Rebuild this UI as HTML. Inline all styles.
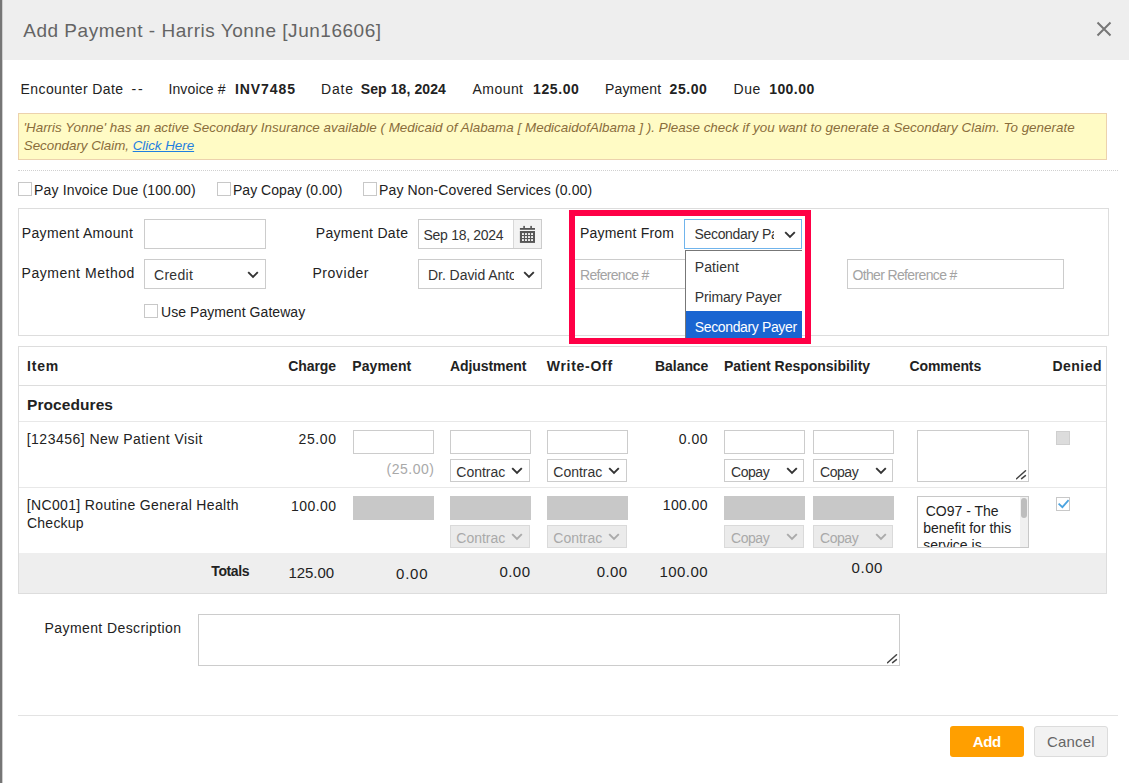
<!DOCTYPE html>
<html><head><meta charset="utf-8"><style>
html,body{margin:0;padding:0;}
body{width:1129px;height:783px;overflow:hidden;position:relative;background:#fff;font-family:"Liberation Sans",sans-serif;}
.t{position:absolute;white-space:nowrap;line-height:1;}
</style></head><body>
<div style="position:absolute;left:0px;top:0px;width:2px;height:783px;background:#767676;"></div>
<div style="position:absolute;left:2px;top:0px;width:1px;height:783px;background:#cfcfcf;"></div>
<div style="position:absolute;left:3px;top:0px;width:1126px;height:60px;background:#eeeeee;"></div>
<div class="t" id="tc54250ba" style="left:23.19px;top:20.72px;font-size:19px;color:#646464;letter-spacing:0.522px;">Add Payment - Harris Yonne [Jun16606]</div>
<svg style="position:absolute;left:1096px;top:21px" width="16" height="16" viewBox="0 0 16 16"><path d="M1.5 1.5L14.5 14.5M14.5 1.5L1.5 14.5" stroke="#777" stroke-width="2"/></svg>
<div class="t" id="t27c33cfd" style="left:20.57px;top:81.95px;font-size:14px;color:#222;letter-spacing:0.4px;">Encounter Date</div>
<div class="t" id="t0044cf76" style="left:131.57px;top:81.95px;font-size:14px;color:#222;letter-spacing:1.8px;">--</div>
<div class="t" id="t6191a0e9" style="left:168.38px;top:81.95px;font-size:14px;color:#222;letter-spacing:0.15px;">Invoice #</div>
<div class="t" id="t9ece07f6" style="left:235.00px;top:81.95px;font-size:14px;color:#222;font-weight:700;letter-spacing:0.917px;">INV7485</div>
<div class="t" id="t7bcd9e4f" style="left:321.00px;top:81.95px;font-size:14px;color:#222;letter-spacing:0.833px;">Date</div>
<div class="t" id="tf08f2a6c" style="left:360.76px;top:81.95px;font-size:14px;color:#222;font-weight:700;letter-spacing:0.091px;">Sep 18, 2024</div>
<div class="t" id="t1211e731" style="left:472.57px;top:81.95px;font-size:14px;color:#222;letter-spacing:0.44px;">Amount</div>
<div class="t" id="ta4474dc1" style="left:533.00px;top:81.95px;font-size:14px;color:#222;font-weight:700;letter-spacing:0.6px;">125.00</div>
<div class="t" id="t69b8a38b" style="left:605.00px;top:81.95px;font-size:14px;color:#222;letter-spacing:0.133px;">Payment</div>
<div class="t" id="tebc281ab" style="left:669.57px;top:81.95px;font-size:14px;color:#222;font-weight:700;letter-spacing:0.575px;">25.00</div>
<div class="t" id="tcc3e4b13" style="left:733.38px;top:81.95px;font-size:14px;color:#222;letter-spacing:0.65px;">Due</div>
<div class="t" id="t79837fd1" style="left:769.17px;top:81.95px;font-size:14px;color:#222;font-weight:700;letter-spacing:0.44px;">100.00</div>
<div style="position:absolute;left:18px;top:113px;width:1089px;height:47px;background:#fffbc5;border:1px solid #ecd2ad;box-sizing:border-box;"></div>
<div class="t" id="teb8300fe" style="left:23.38px;top:121.36px;font-size:13.4px;color:#8a6d3b;font-style:italic;letter-spacing:0.027px;">'Harris Yonne' has an active Secondary Insurance available ( Medicaid of Alabama [ MedicaidofAlbama ] ). Please check if you want to generate a Secondary Claim. To generate</div>
<div class="t" id="t9f3bacfe" style="left:23.79px;top:138.66px;font-size:13.4px;color:#8a6d3b;font-style:italic;letter-spacing:-0.03px;">Secondary Claim, <span style="color:#1f7fe0;text-decoration:underline">Click Here</span></div>
<div style="position:absolute;left:18px;top:170px;width:1100px;height:1px;border-top:1px dotted #d0d0d0;box-sizing:border-box;"></div>
<div style="position:absolute;left:18px;top:182px;width:14px;height:14px;background:#fff;border:1px solid #c8c8c8;box-sizing:border-box;"></div>
<div class="t" id="tad95059f" style="left:34.00px;top:182.75px;font-size:14px;color:#222;letter-spacing:0.162px;">Pay Invoice Due (100.00)</div>
<div style="position:absolute;left:217px;top:182px;width:14px;height:14px;background:#fff;border:1px solid #c8c8c8;box-sizing:border-box;"></div>
<div class="t" id="tfc70c6ec" style="left:233.00px;top:182.75px;font-size:14px;color:#222;letter-spacing:0.027px;">Pay Copay (0.00)</div>
<div style="position:absolute;left:363px;top:182px;width:14px;height:14px;background:#fff;border:1px solid #c8c8c8;box-sizing:border-box;"></div>
<div class="t" id="ted5e3576" style="left:379.00px;top:182.75px;font-size:14px;color:#222;letter-spacing:0.127px;">Pay Non-Covered Services (0.00)</div>
<div style="position:absolute;left:18px;top:208px;width:1091px;height:128px;border:1px solid #dddddd;box-sizing:border-box;"></div>
<div class="t" id="tf3c58aa5" style="left:21.76px;top:226.15px;font-size:14px;color:#222;letter-spacing:0.346px;">Payment Amount</div>
<div style="position:absolute;left:144px;top:219px;width:122px;height:30px;background:#fff;border:1px solid #cccccc;box-sizing:border-box;"></div>
<div class="t" id="te428217c" style="left:21.57px;top:266.15px;font-size:14px;color:#222;letter-spacing:0.531px;">Payment Method</div>
<div style="position:absolute;left:144px;top:259px;width:122px;height:30px;background:#fff;border:1px solid #cccccc;box-sizing:border-box;"></div>
<div class="t" id="t7a71466e" style="left:154.00px;top:268.45px;font-size:14px;color:#333;letter-spacing:0.3px;">Credit</div>
<svg style="position:absolute;left:247.3px;top:271px" width="12" height="8" viewBox="0 0 12 8"><path d="M1.2 1.2L6.0 6.0L10.799999999999999 1.2" fill="none" stroke="#333" stroke-width="1.9"/></svg>
<div style="position:absolute;left:144px;top:304px;width:14px;height:14px;background:#fff;border:1px solid #c8c8c8;box-sizing:border-box;"></div>
<div class="t" id="ta91dc768" style="left:161.00px;top:304.65px;font-size:14px;color:#222;letter-spacing:0.056px;">Use Payment Gateway</div>
<div class="t" id="t1067f209" style="left:315.76px;top:226.15px;font-size:14px;color:#222;letter-spacing:0.318px;">Payment Date</div>
<div style="position:absolute;left:418px;top:219px;width:124px;height:30px;background:#fff;border:1px solid #cccccc;box-sizing:border-box;"></div>
<div style="position:absolute;left:513px;top:220px;width:28px;height:28px;background:#f3f3f3;border-left:1px solid #d8d8d8;box-sizing:border-box;"></div>
<div class="t" id="t0ba4c2be" style="left:423.57px;top:228.35px;font-size:14px;color:#333;letter-spacing:-0.3px;">Sep 18, 2024</div>
<svg style="position:absolute;left:519px;top:225px" width="17" height="19" viewBox="0 0 17 19"><g fill="#555"><rect x="4.3" y="0.9" width="1.6" height="2.2"/><rect x="11.3" y="0.9" width="1.6" height="2.2"/><rect x="0.9" y="3" width="15.1" height="1.8"/><rect x="0.9" y="6" width="15.1" height="11.9"/></g><rect x="3.0" y="8.1" width="1.9" height="1.9" fill="#f3f3f3"/><rect x="3.0" y="11.1" width="1.9" height="1.9" fill="#f3f3f3"/><rect x="3.0" y="14.1" width="1.9" height="1.9" fill="#f3f3f3"/><rect x="6.029999999999999" y="8.1" width="1.9" height="1.9" fill="#f3f3f3"/><rect x="6.029999999999999" y="11.1" width="1.9" height="1.9" fill="#f3f3f3"/><rect x="6.029999999999999" y="14.1" width="1.9" height="1.9" fill="#f3f3f3"/><rect x="9.059999999999999" y="8.1" width="1.9" height="1.9" fill="#f3f3f3"/><rect x="9.059999999999999" y="11.1" width="1.9" height="1.9" fill="#f3f3f3"/><rect x="9.059999999999999" y="14.1" width="1.9" height="1.9" fill="#f3f3f3"/><rect x="12.09" y="8.1" width="1.9" height="1.9" fill="#f3f3f3"/><rect x="12.09" y="11.1" width="1.9" height="1.9" fill="#f3f3f3"/><rect x="12.09" y="14.1" width="1.9" height="1.9" fill="#f3f3f3"/></svg>
<div class="t" id="t8bad33eb" style="left:312.38px;top:266.15px;font-size:14px;color:#222;letter-spacing:0.571px;">Provider</div>
<div style="position:absolute;left:418px;top:259px;width:124px;height:30px;background:#fff;border:1px solid #cccccc;box-sizing:border-box;"></div>
<div style="position:absolute;left:428px;top:262px;width:85.6px;overflow:hidden;height:24px"><div class="t" style="left:0;top:6.15px;font-size:14px;color:#333;letter-spacing:-0.05px">Dr. David Antoine</div></div>
<svg style="position:absolute;left:523px;top:271px" width="12" height="8" viewBox="0 0 12 8"><path d="M1.2 1.2L6.0 6.0L10.799999999999999 1.2" fill="none" stroke="#333" stroke-width="1.9"/></svg>
<div class="t" id="t29297081" style="left:580.00px;top:225.85px;font-size:14px;color:#222;letter-spacing:0.199px;">Payment From</div>
<div style="position:absolute;left:573px;top:259px;width:127px;height:30px;background:#fff;border:1px solid #cccccc;box-sizing:border-box;"></div>
<div class="t" id="t6147a310" style="left:580.00px;top:267.65px;font-size:14px;color:#a3a3a3;letter-spacing:-0.7px;">Reference #</div>
<div style="position:absolute;left:684px;top:219px;width:118px;height:30px;background:#fff;border:1px solid #70b4ec;box-sizing:border-box;"></div>
<div style="position:absolute;left:694.5px;top:222px;width:79.4px;overflow:hidden;height:24px"><div class="t" style="left:0;top:5.45px;font-size:14px;color:#333;letter-spacing:-0.33px">Secondary Payer</div></div>
<svg style="position:absolute;left:783.5px;top:231px" width="12" height="8" viewBox="0 0 12 8"><path d="M1.2 1.2L6.0 6.0L10.799999999999999 1.2" fill="none" stroke="#333" stroke-width="1.9"/></svg>
<div style="position:absolute;left:685px;top:250px;width:117px;height:93px;background:#fff;border-left:1px solid #777;border-top:1px solid #777;box-sizing:border-box;"></div>
<div style="position:absolute;left:686px;top:311px;width:116px;height:32px;background:#1a65d1;"></div>
<div class="t" id="td0c9efa4" style="left:694.78px;top:260.15px;font-size:14px;color:#333;letter-spacing:0.083px;">Patient</div>
<div class="t" id="t62152dd9" style="left:694.78px;top:289.75px;font-size:14px;color:#333;letter-spacing:-0.158px;">Primary Payer</div>
<div class="t" id="t38b36656" style="left:694.78px;top:319.55px;font-size:14px;color:#fff;letter-spacing:-0.365px;">Secondary Payer</div>
<div style="position:absolute;left:569px;top:209.5px;width:242px;height:134.0px;border:6px solid #ff0046;box-sizing:border-box;"></div>
<div style="position:absolute;left:847px;top:259px;width:217px;height:30px;background:#fff;border:1px solid #cccccc;box-sizing:border-box;"></div>
<div class="t" id="t225e9a34" style="left:852.38px;top:267.65px;font-size:14px;color:#a3a3a3;letter-spacing:-0.636px;">Other Reference #</div>
<div style="position:absolute;left:18px;top:346px;width:1089px;height:248px;border:1px solid #dddddd;box-sizing:border-box;"></div>
<div style="position:absolute;left:19px;top:385px;width:1087px;height:1px;background:#dddddd;"></div>
<div style="position:absolute;left:19px;top:421px;width:1087px;height:1px;background:#e8e8e8;"></div>
<div style="position:absolute;left:19px;top:487px;width:1087px;height:1px;background:#e8e8e8;"></div>
<div style="position:absolute;left:19px;top:553px;width:1087px;height:40px;background:#eeeeee;"></div>
<div class="t" id="t08ffa061" style="left:27.00px;top:359.15px;font-size:14px;color:#222;font-weight:700;letter-spacing:0.8px;">Item</div>
<div class="t" id="ta7cdc253" style="left:288.36px;top:359.15px;font-size:14px;color:#222;font-weight:700;letter-spacing:-0.12px;">Charge</div>
<div class="t" id="tec410be5" style="left:352.18px;top:359.15px;font-size:14px;color:#222;font-weight:700;letter-spacing:0.117px;">Payment</div>
<div class="t" id="t62dad5ad" style="left:450.00px;top:359.15px;font-size:14px;color:#222;font-weight:700;letter-spacing:-0.078px;">Adjustment</div>
<div class="t" id="tc0e0c814" style="left:546.78px;top:359.15px;font-size:14px;color:#222;font-weight:700;letter-spacing:0.711px;">Write-Off</div>
<div class="t" id="td8351928" style="left:655.09px;top:359.15px;font-size:14px;color:#222;font-weight:700;letter-spacing:-0.066px;">Balance</div>
<div class="t" id="tc99c7c56" style="left:724.00px;top:359.15px;font-size:14px;color:#222;font-weight:700;letter-spacing:-0.005px;">Patient Responsibility</div>
<div class="t" id="t8972ca6d" style="left:909.57px;top:359.15px;font-size:14px;color:#222;font-weight:700;letter-spacing:-0.101px;">Comments</div>
<div class="t" id="t5d8f400b" style="left:1052.57px;top:359.15px;font-size:14px;color:#222;font-weight:700;letter-spacing:0.44px;">Denied</div>
<div class="t" id="tde3f442f" style="left:27.00px;top:396.78px;font-size:15.5px;color:#222;font-weight:700;letter-spacing:0.078px;">Procedures</div>
<div class="t" id="t336a68d2" style="left:26.76px;top:432.25px;font-size:14px;color:#222;letter-spacing:0.472px;">[123456] New Patient Visit</div>
<div class="t" id="tbbc466bd" style="left:298.53px;top:432.25px;font-size:14px;color:#222;letter-spacing:0.6px;">25.00</div>
<div style="position:absolute;left:353px;top:430px;width:81px;height:24px;background:#fff;border:1px solid #cccccc;box-sizing:border-box;"></div>
<div class="t" id="t7093d671" style="left:386.53px;top:462.15px;font-size:14px;color:#a9a9a9;letter-spacing:0.517px;">(25.00)</div>
<div style="position:absolute;left:450px;top:430px;width:81px;height:24px;background:#fff;border:1px solid #cccccc;box-sizing:border-box;"></div>
<div style="position:absolute;left:450px;top:459px;width:80px;height:23px;background:#fff;border:1px solid #cccccc;box-sizing:border-box;"></div>
<div style="position:absolute;left:456.3px;top:461px;width:52px;overflow:hidden;height:21px"><div class="t" style="left:0;top:3.85px;font-size:14px;color:#333;letter-spacing:0px">Contrac</div></div>
<svg style="position:absolute;left:511px;top:467px" width="12" height="8" viewBox="0 0 12 8"><path d="M1.2 1.2L6.0 6.0L10.799999999999999 1.2" fill="none" stroke="#333" stroke-width="1.9"/></svg>
<div style="position:absolute;left:547px;top:430px;width:81px;height:24px;background:#fff;border:1px solid #cccccc;box-sizing:border-box;"></div>
<div style="position:absolute;left:547px;top:459px;width:80px;height:23px;background:#fff;border:1px solid #cccccc;box-sizing:border-box;"></div>
<div style="position:absolute;left:553.3px;top:461px;width:52px;overflow:hidden;height:21px"><div class="t" style="left:0;top:3.85px;font-size:14px;color:#333;letter-spacing:0px">Contrac</div></div>
<svg style="position:absolute;left:608px;top:467px" width="12" height="8" viewBox="0 0 12 8"><path d="M1.2 1.2L6.0 6.0L10.799999999999999 1.2" fill="none" stroke="#333" stroke-width="1.9"/></svg>
<div class="t" id="t3525a7f0" style="left:678.66px;top:432.05px;font-size:14px;color:#222;letter-spacing:0.567px;">0.00</div>
<div style="position:absolute;left:724px;top:430px;width:81px;height:24px;background:#fff;border:1px solid #cccccc;box-sizing:border-box;"></div>
<div style="position:absolute;left:724px;top:459px;width:80px;height:23px;background:#fff;border:1px solid #cccccc;box-sizing:border-box;"></div>
<div class="t" id="tdf309d18" style="left:731.00px;top:464.95px;font-size:14px;color:#333;letter-spacing:-0.45px;">Copay</div>
<svg style="position:absolute;left:785.6px;top:467px" width="12" height="8" viewBox="0 0 12 8"><path d="M1.2 1.2L6.0 6.0L10.799999999999999 1.2" fill="none" stroke="#333" stroke-width="1.9"/></svg>
<div style="position:absolute;left:813px;top:430px;width:81px;height:24px;background:#fff;border:1px solid #cccccc;box-sizing:border-box;"></div>
<div style="position:absolute;left:813px;top:459px;width:80px;height:23px;background:#fff;border:1px solid #cccccc;box-sizing:border-box;"></div>
<div class="t" id="ta6b03320" style="left:820.00px;top:464.95px;font-size:14px;color:#333;letter-spacing:-0.45px;">Copay</div>
<svg style="position:absolute;left:874.6px;top:467px" width="12" height="8" viewBox="0 0 12 8"><path d="M1.2 1.2L6.0 6.0L10.799999999999999 1.2" fill="none" stroke="#333" stroke-width="1.9"/></svg>
<div style="position:absolute;left:917px;top:430px;width:112px;height:52px;background:#fff;border:1px solid #cccccc;box-sizing:border-box;"></div>
<svg style="position:absolute;left:1016px;top:469px" width="11" height="11" viewBox="0 0 11 11"><path d="M0.5 9.8L9.5 1.7M5.6 9.6L9.4 6.6" stroke="#444" stroke-width="1.5" stroke-linecap="round"/></svg>
<div style="position:absolute;left:1056px;top:431px;width:14px;height:14px;background:#dcdcdc;border:1px solid #cfcfcf;box-sizing:border-box;"></div>
<div class="t" id="t5cf16dab" style="left:26.76px;top:497.75px;font-size:14px;color:#222;letter-spacing:0.355px;">[NC001] Routine General Health</div>
<div class="t" id="t0b29a383" style="left:27.00px;top:515.95px;font-size:14px;color:#222;letter-spacing:0.234px;">Checkup</div>
<div class="t" id="t68127eb7" style="left:290.96px;top:498.55px;font-size:14px;color:#222;letter-spacing:0.44px;">100.00</div>
<div style="position:absolute;left:353px;top:496px;width:81px;height:24px;background:#c8c8c8;"></div>
<div style="position:absolute;left:450px;top:496px;width:81px;height:24px;background:#c8c8c8;"></div>
<div style="position:absolute;left:547px;top:496px;width:81px;height:24px;background:#c8c8c8;"></div>
<div style="position:absolute;left:724px;top:496px;width:81px;height:24px;background:#c8c8c8;"></div>
<div style="position:absolute;left:813px;top:496px;width:81px;height:24px;background:#c8c8c8;"></div>
<div style="position:absolute;left:450px;top:525px;width:80px;height:23px;background:#ebebeb;border:1px solid #dadada;box-sizing:border-box;"></div>
<div style="position:absolute;left:456.3px;top:527px;width:52px;overflow:hidden;height:21px"><div class="t" style="left:0;top:3.85px;font-size:14px;color:#a9a9a9;letter-spacing:0px">Contrac</div></div>
<svg style="position:absolute;left:511px;top:533px" width="12" height="8" viewBox="0 0 12 8"><path d="M1.2 1.2L6.0 6.0L10.799999999999999 1.2" fill="none" stroke="#aaa" stroke-width="1.9"/></svg>
<div style="position:absolute;left:547px;top:525px;width:80px;height:23px;background:#ebebeb;border:1px solid #dadada;box-sizing:border-box;"></div>
<div style="position:absolute;left:553.3px;top:527px;width:52px;overflow:hidden;height:21px"><div class="t" style="left:0;top:3.85px;font-size:14px;color:#a9a9a9;letter-spacing:0px">Contrac</div></div>
<svg style="position:absolute;left:608px;top:533px" width="12" height="8" viewBox="0 0 12 8"><path d="M1.2 1.2L6.0 6.0L10.799999999999999 1.2" fill="none" stroke="#aaa" stroke-width="1.9"/></svg>
<div class="t" id="t22fac9c6" style="left:662.76px;top:498.15px;font-size:14px;color:#222;letter-spacing:0.4px;">100.00</div>
<div style="position:absolute;left:724px;top:525px;width:80px;height:23px;background:#ebebeb;border:1px solid #dadada;box-sizing:border-box;"></div>
<div class="t" id="te09cbdda" style="left:731.00px;top:530.95px;font-size:14px;color:#a9a9a9;letter-spacing:-0.45px;">Copay</div>
<svg style="position:absolute;left:785.6px;top:533px" width="12" height="8" viewBox="0 0 12 8"><path d="M1.2 1.2L6.0 6.0L10.799999999999999 1.2" fill="none" stroke="#aaa" stroke-width="1.9"/></svg>
<div style="position:absolute;left:813px;top:525px;width:80px;height:23px;background:#ebebeb;border:1px solid #dadada;box-sizing:border-box;"></div>
<div class="t" id="t41ea45c4" style="left:820.00px;top:530.95px;font-size:14px;color:#a9a9a9;letter-spacing:-0.45px;">Copay</div>
<svg style="position:absolute;left:874.6px;top:533px" width="12" height="8" viewBox="0 0 12 8"><path d="M1.2 1.2L6.0 6.0L10.799999999999999 1.2" fill="none" stroke="#aaa" stroke-width="1.9"/></svg>
<div style="position:absolute;left:917px;top:496px;width:112px;height:52px;border:1px solid #c8c8c8;box-sizing:border-box;overflow:hidden;background:#fff"><div class="t" style="left:5.3px;top:5.5px;font-size:14px;color:#222;white-space:normal;width:98px;line-height:17.2px"><span style="margin-left:2.4px">CO97 - The</span> benefit for this service is included</div><div style="position:absolute;right:0;top:0;width:8px;height:50px;background:#f0f0f0"></div><div style="position:absolute;right:1px;top:1px;width:6px;height:20px;background:#bdbdbd;border-radius:3px"></div></div>
<div style="position:absolute;left:1056px;top:497px;width:14px;height:14px;background:#fff;border:1px solid #c8c8c8;box-sizing:border-box;"></div>
<svg style="position:absolute;left:1058px;top:499px" width="11" height="10" viewBox="0 0 11 10"><path d="M0.6 4.6L4.4 8.2L10.6 1.2" fill="none" stroke="#4aa3e0" stroke-width="1.8"/></svg>
<div class="t" id="t61614a13" style="left:211.28px;top:564.15px;font-size:14px;color:#222;font-weight:700;letter-spacing:-0.38px;">Totals</div>
<div class="t" id="t876a63fc" style="left:288.41px;top:565.40px;font-size:15px;color:#222;letter-spacing:-0.02px;">125.00</div>
<div class="t" id="t69282998" style="left:395.99px;top:565.90px;font-size:15px;color:#222;letter-spacing:0.8px;">0.00</div>
<div class="t" id="t32e994b0" style="left:499.39px;top:563.60px;font-size:15px;color:#222;letter-spacing:0.467px;">0.00</div>
<div class="t" id="t3b887b0c" style="left:596.80px;top:563.60px;font-size:15px;color:#222;letter-spacing:0.333px;">0.00</div>
<div class="t" id="tef381e13" style="left:659.41px;top:564.00px;font-size:15px;color:#222;letter-spacing:0.46px;">100.00</div>
<div class="t" id="t51a73098" style="left:851.50px;top:560.40px;font-size:15px;color:#222;letter-spacing:0.567px;">0.00</div>
<div class="t" id="td75d944e" style="left:44.57px;top:621.35px;font-size:14px;color:#222;letter-spacing:0.406px;">Payment Description</div>
<div style="position:absolute;left:198px;top:614px;width:702px;height:52px;background:#fff;border:1px solid #cccccc;box-sizing:border-box;"></div>
<svg style="position:absolute;left:887px;top:653px" width="11" height="11" viewBox="0 0 11 11"><path d="M0.5 9.8L9.5 1.7M5.6 9.6L9.4 6.6" stroke="#444" stroke-width="1.5" stroke-linecap="round"/></svg>
<div style="position:absolute;left:18px;top:715px;width:1100px;height:1px;background:#e3e3e3;"></div>
<div style="position:absolute;left:950px;top:726px;width:74px;height:31px;background:#ff9f00;border-radius:3px;"></div>
<div class="t" id="te176b4a9" style="left:972.78px;top:733.80px;font-size:15px;color:#fff;font-weight:700;letter-spacing:-0.4px;">Add</div>
<div style="position:absolute;left:1034px;top:726px;width:74px;height:31px;background:#f2f2f2;border:1px solid #dcdcdc;border-radius:3px;box-sizing:border-box;"></div>
<div class="t" id="t624b60a9" style="left:1047.00px;top:733.80px;font-size:15px;color:#666;letter-spacing:0.2px;">Cancel</div>
</body></html>
